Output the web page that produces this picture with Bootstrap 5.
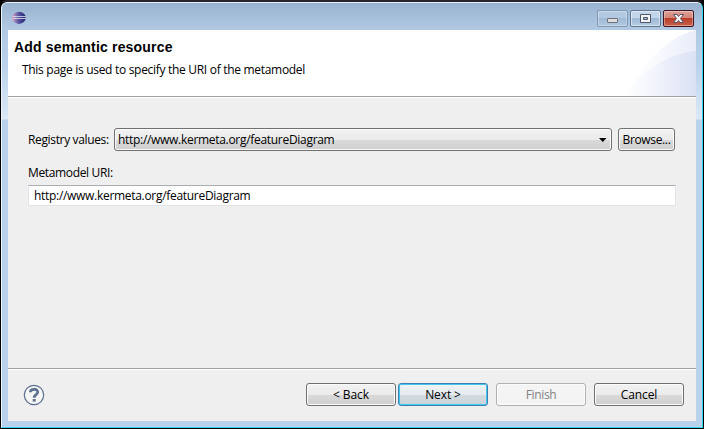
<!DOCTYPE html>
<html lang="en">
<head>
<meta charset="utf-8">
<title>Add semantic resource</title>
<link href="https://cdn.jsdelivr.net/npm/bootstrap@5.3.0/dist/css/bootstrap.min.css" rel="stylesheet">
<style>
body{width:704px;height:429px;overflow:hidden;background:#000;font-family:"Open Sans","Noto Sans",sans-serif;font-size:12px;line-height:16px;color:#000}
.win{width:704px;height:429px;padding:2px 1px 1px;border-radius:7px 7px 0 0;background:linear-gradient(#26262c 0 2px,#000 2px)}
.frame{height:426px;border:1px solid #35d5f2;border-left-color:#eef6fd;border-top-color:#e8f1fa;border-radius:6px 6px 0 0;padding:0 6px 5px;background:linear-gradient(#98b3d0 0,#b2c9e3 27px,#b9d1ea 60px,#d8e6f4 110px,#dce8f5 116px,#b9d1ea 117px)}
.titlebar{height:27px;padding:7px 2px 0 4px}
.capbtns,.pair{gap:2px}
.capbtn{width:31px;height:17px;border:1px solid #5d7693;border-radius:2px;box-shadow:inset 0 0 0 1px #ffffff80;background:linear-gradient(#c3d5e9 0 45%,#9fb8d3 46%,#b4cbe3)}
.capbtn.dim{border-color:#7f98b4;background:linear-gradient(#b3c9e1 0 45%,#9fb9d5 46%,#b0c8e1);box-shadow:inset 0 0 0 1px #ffffff4d}
.capbtn.shut{border-color:#431422;background:linear-gradient(#dfa196 0,#d48577 45%,#b83c27 46%,#c9614a);box-shadow:inset 0 0 0 1px #ffffff59}
.capbtn svg{display:block}
.pane{height:391px;background:#efefef}
.banner{height:68px;background:#fff;border-bottom:1px solid #fff;box-shadow:inset 0 -1px #a0a0a0}
.banner h1{font:bold 14px/16px "Liberation Sans",sans-serif;margin:9px 0 0 6px;letter-spacing:.18px}
.banner p{margin:7px 0 0 14px}
.form-area{height:270px;padding:30px 20px 0}
.lbl{width:86px;white-space:nowrap}
.uri-lbl{margin:14px 0 4px}
.btn-w{height:23px;padding:0;border:1px solid #707070;border-radius:3px;box-shadow:inset 0 0 0 1px #fbfbfb;background:linear-gradient(#f2f2f2 0,#ebebeb 50%,#dadada 51%,#cfcfcf);font:inherit;line-height:21px;color:#000;text-align:center}
.btn-w.wide{width:90px}
.btn-w.browse{width:57px;margin-left:6px}
.btn-w.primed{border-color:#3c7fb1;box-shadow:inset 0 0 0 1px #45c8f0;background:linear-gradient(#eff3f5 0,#e4eaed 50%,#d3dbdf 51%,#c9d3d8)}
.btn-w:disabled{border-color:#adb2b5;background:#f4f4f4;color:#838383;opacity:1}
.combo{width:498px;padding:0 4px 0 3px}
.uri{height:21px;width:648px;padding:0 5px;background:#fff;border:1px solid #e2e3ea;border-top-color:#abadb3;border-radius:1px;font:inherit;color:#000}
.actions{height:53px;border-top:1px solid #a0a0a0;box-shadow:inset 0 1px #fff;padding:0 12px 1px 15px}
.t1{letter-spacing:-.3px}.t2{letter-spacing:-.35px}.t3{letter-spacing:-.3px}.t4{letter-spacing:-.1px}
</style>
<script src="https://cdn.jsdelivr.net/npm/bootstrap@5.3.0/dist/js/bootstrap.bundle.min.js"></script>
</head>
<body>
<div class="win"><div class="frame">
<header class="titlebar d-flex align-items-start">
<svg width="14" height="14" viewBox="0 0 14 14"><defs><linearGradient id="orb"><stop offset="0" stop-color="#ef9db9"/><stop offset=".2" stop-color="#9b7fb3"/><stop offset=".5" stop-color="#5450a0"/><stop offset="1" stop-color="#25236d"/></linearGradient></defs><ellipse cx="7" cy="7.800" rx="6.800" ry="6.100" fill="url(#orb)"/><path d="M1 6.500H14M1 8.500H14" stroke="#dde4f6" stroke-width=".8"/></svg>
<div class="capbtns d-flex ms-auto">
<div class="capbtn dim"><svg width="29" height="15"><rect x="9.500" y="7.500" width="10" height="4" rx=".5" fill="#dedede" stroke="#6d7079"/></svg></div>
<div class="capbtn"><svg width="29" height="15"><path d="M9.500 3.500h10v8h-10zM12.500 6.500v2h4v-2z" fill="#f4f4f4" fill-rule="evenodd" stroke="#50566a"/></svg></div>
<div class="capbtn shut"><svg width="29" height="15"><path d="M9.500 3.500h3.500l1.500 2 1.500-2h3.500l-3 4 3 4h-3.500l-1.500-2-1.500 2h-3.500l3-4z" fill="#f5f5f5" stroke="#55526a"/></svg></div>
</div>
</header>
<main class="pane">
<section class="banner d-flex justify-content-between">
<div><h1>Add semantic resource</h1><p class="t1">This page is used to specify the URI of the metamodel</p></div>
<svg width="75" height="66" viewBox="0 0 75 66"><defs><linearGradient id="a"><stop offset="0" stop-color="#fff"/><stop offset=".45" stop-color="#f9fafe"/><stop offset="1" stop-color="#e8edf9"/></linearGradient><linearGradient id="b"><stop offset="0" stop-color="#fff"/><stop offset=".5" stop-color="#eff2fb"/><stop offset="1" stop-color="#dbe1f5"/></linearGradient></defs><path d="M4 66C20 38 42 8 75 0V66z" fill="url(#a)"/><path d="M4 66C24 39 46 24 75 21V66z" fill="url(#b)"/></svg>
</section>
<section class="form-area">
<div class="d-flex align-items-center">
<span class="lbl t2">Registry values:</span>
<div class="btn-w combo d-flex align-items-center justify-content-between"><span class="t3">http://www.kermeta.org/featureDiagram</span><svg width="8" height="4"><path d="M0 0h7.500L3.750 4z"/></svg></div>
<button class="btn-w browse t2">Browse...</button>
</div>
<div class="uri-lbl t2">Metamodel URI:</div>
<div class="uri d-flex align-items-center"><span class="t3">http://www.kermeta.org/featureDiagram</span></div>
</section>
<footer class="actions d-flex align-items-center">
<svg class="me-auto" width="22" height="22" viewBox="0 0 22 22"><circle cx="11" cy="11" r="9.700" fill="#f5f5f5" stroke="#5c7190" stroke-width="1.200"/><path d="M7.300 8.300C7.500 4.300 14.700 4.300 14.700 8.100C14.700 10.700 11.200 10.600 11.200 13.800" fill="none" stroke="#5f7391" stroke-width="2.800"/><rect x="9.700" y="15" width="3" height="2.600" fill="#5f7391"/></svg>
<div class="pair d-flex"><button class="btn-w wide t4">&lt; Back</button><button class="btn-w wide primed t4">Next &gt;</button></div>
<div class="d-flex ms-2 gap-2"><button class="btn-w wide t2" disabled>Finish</button><button class="btn-w wide t4">Cancel</button></div>
</footer>
</main>
</div></div>
</body>
</html>
